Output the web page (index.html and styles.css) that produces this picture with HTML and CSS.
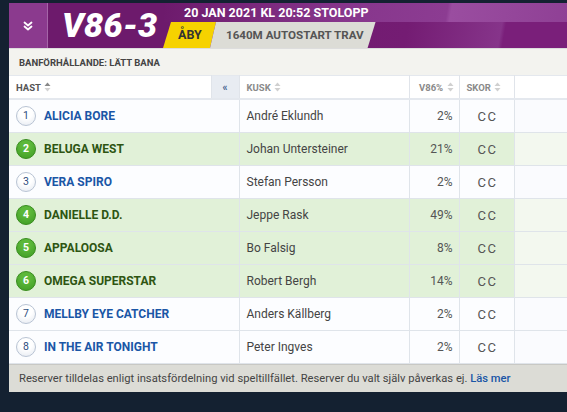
FILE: index.html
```html
<!DOCTYPE html>
<html lang="sv">
<head>
<meta charset="utf-8">
<link rel="stylesheet" href="styles.css">
</head>
<body>
<div class="panel">
  <header class="head">
    <button class="toggle" aria-label="Visa">
      <svg width="10" height="10" viewBox="0 0 10 10"><path d="M1.5 1.5 L5 4.5 L8.5 1.5 M1.5 5.5 L5 8.5 L8.5 5.5" fill="none" stroke="#fff" stroke-width="1.8" stroke-linecap="round" stroke-linejoin="round"/></svg>
    </button>
    <div class="title">V86-3</div>
    <div class="info">
      <div class="date">20 JAN 2021 KL 20:52 STOLOPP</div>
      <div class="tags">
        <span class="track">ÅBY</span>
        <span class="dist">1640M AUTOSTART TRAV</span>
      </div>
    </div>
  </header>
  <div class="cond">BANFÖRHÅLLANDE: LÄTT BANA</div>
  <table class="grid">
    <colgroup>
      <col class="c-hast"><col class="c-btn"><col class="c-kusk"><col class="c-pct"><col class="c-skor"><col>
    </colgroup>
    <thead>
      <tr>
        <th class="th-hast">HAST <svg class="sort" width="7" height="10" viewBox="0 0 7 10"><path d="M3.5 0.5 L6.5 4 L0.5 4Z" fill="#888"/><path d="M3.5 9.5 L6.5 6 L0.5 6Z" fill="#d2d2d2"/></svg></th>
        <th class="th-btn">«</th>
        <th class="th-light">KUSK <svg class="sort" width="7" height="10" viewBox="0 0 7 10"><path d="M3.5 0.5 L6.5 4 L0.5 4Z" fill="#d0d0d0"/><path d="M3.5 9.5 L6.5 6 L0.5 6Z" fill="#d0d0d0"/></svg></th>
        <th class="th-light th-pct">V86% <svg class="sort" width="7" height="10" viewBox="0 0 7 10"><path d="M3.5 0.5 L6.5 4 L0.5 4Z" fill="#d0d0d0"/><path d="M3.5 9.5 L6.5 6 L0.5 6Z" fill="#d0d0d0"/></svg></th>
        <th class="th-light">SKOR <svg class="sort" width="7" height="10" viewBox="0 0 7 10"><path d="M3.5 0.5 L6.5 4 L0.5 4Z" fill="#d0d0d0"/><path d="M3.5 9.5 L6.5 6 L0.5 6Z" fill="#d0d0d0"/></svg></th>
        <th class="th-end"></th>
      </tr>
    </thead>
    <tbody>
      <tr><td colspan="2"><span class="num">1</span><span class="name">ALICIA BORE</span></td><td class="kusk">André Eklundh</td><td class="pct">2%</td><td class="skor">CC</td><td class="end"></td></tr>
      <tr class="sel"><td colspan="2"><span class="num">2</span><span class="name">BELUGA WEST</span></td><td class="kusk">Johan Untersteiner</td><td class="pct">21%</td><td class="skor">CC</td><td class="end"></td></tr>
      <tr><td colspan="2"><span class="num">3</span><span class="name">VERA SPIRO</span></td><td class="kusk">Stefan Persson</td><td class="pct">2%</td><td class="skor">CC</td><td class="end"></td></tr>
      <tr class="sel"><td colspan="2"><span class="num">4</span><span class="name">DANIELLE D.D.</span></td><td class="kusk">Jeppe Rask</td><td class="pct">49%</td><td class="skor">CC</td><td class="end"></td></tr>
      <tr class="sel"><td colspan="2"><span class="num">5</span><span class="name">APPALOOSA</span></td><td class="kusk">Bo Falsig</td><td class="pct">8%</td><td class="skor">CC</td><td class="end"></td></tr>
      <tr class="sel"><td colspan="2"><span class="num">6</span><span class="name">OMEGA SUPERSTAR</span></td><td class="kusk">Robert Bergh</td><td class="pct">14%</td><td class="skor">CC</td><td class="end"></td></tr>
      <tr><td colspan="2"><span class="num">7</span><span class="name">MELLBY EYE CATCHER</span></td><td class="kusk">Anders Källberg</td><td class="pct">2%</td><td class="skor">CC</td><td class="end"></td></tr>
      <tr><td colspan="2"><span class="num">8</span><span class="name">IN THE AIR TONIGHT</span></td><td class="kusk">Peter Ingves</td><td class="pct">2%</td><td class="skor">CC</td><td class="end"></td></tr>
    </tbody>
  </table>
  <footer class="foot">Reserver tilldelas enligt insatsfördelning vid speltillfället. Reserver du valt själv påverkas ej. <a href="#">Läs mer</a></footer>
</div>
</body>
</html>
```
FILE: styles.css
```css
html, body { margin: 0; padding: 0; }
body {
  background: #142131;
  font-family: Roboto, "Noto Sans", Arial, sans-serif;
  padding: 3px 0 0 9px;
  height: 412px;
  box-sizing: border-box;
  overflow: hidden;
}
.panel { width: 558px; }

.head {
  display: flex;
  height: 45px;
  background: #6d1a6c;
  overflow: hidden;
}
.toggle {
  width: 39px;
  flex: none;
  border: 0;
  border-right: 1px solid #a565a8;
  background: #8b3a8e;
  display: flex;
  align-items: center;
  justify-content: center;
  padding: 0;
}
.title {
  flex: none;
  width: 116px;
  padding-left: 14px;
  box-sizing: border-box;
  color: #fff;
  font-weight: 900;
  font-style: italic;
  font-size: 34px;
  line-height: 45px;
  letter-spacing: 0.3px;
}
.info {
  flex: 1;
  display: flex;
  flex-direction: column;
}
.date {
  height: 19px;
  padding-left: 20px;
  color: #fff;
  font-weight: 700;
  font-size: 12.5px;
  line-height: 20px;
  background: linear-gradient(100deg, #6d1a6c 0%, #87368c 45%, #8c3c92 70%, #9a4da0 71%, #8f4095 100%);
}
.tags {
  flex: 1;
  display: flex;
  background: linear-gradient(100deg, #6d1a6c 0%, #741c73 60%, #86348a 83%, #7a1f7a 84%, #7a1f7a 100%);
}
.track {
  width: 53px;
  box-sizing: border-box;
  background: #f6d200;
  color: #333;
  font-weight: 700;
  font-size: 12.5px;
  line-height: 26px;
  padding: 0 0 0 15px;
  margin-left: -1px;
  clip-path: polygon(8px 0, 100% 0, calc(100% - 6px) 100%, 0 100%);
}
.dist {
  background: #dcdcd6;
  color: #555;
  font-weight: 700;
  font-size: 11.6px;
  line-height: 26px;
  padding: 0 12px 0 16px;
  margin-left: -6px;
  white-space: nowrap;
  clip-path: polygon(6px 0, 100% 0, calc(100% - 8px) 100%, 0 100%);
}

.cond {
  height: 27px;
  background: #f3f3ef;
  color: #444;
  font-size: 9.5px;
  font-weight: 700;
  line-height: 27px;
  padding-left: 10px;
  border-top: 1px solid #ddd;
  box-sizing: border-box;
}

.grid {
  width: 558px;
  border-collapse: collapse;
  table-layout: fixed;
  background: #fff;
}
.c-hast { width: 202px; }
.c-btn { width: 28px; }
.c-kusk { width: 170px; }
.c-pct { width: 50px; }
.c-skor { width: 55px; }

.grid th {
  height: 22px;
  padding: 0 0 0 7px;
  text-align: left;
  font-size: 9.5px;
  font-weight: 700;
  color: #555;
  border-top: 1px solid #e4e8ee;
  border-right: 1px solid #e0e4ea;
  border-bottom: 2px solid #e4e8ee;
  white-space: nowrap;
}
.grid th .sort { vertical-align: -1px; margin-left: 1px; }
.grid th.th-light { color: #8a8a8a; }
.grid th.th-pct { text-align: right; padding: 0 5px 0 0; }
.grid th.th-btn {
  background: #e8ecf2;
  color: #40608e;
  font-size: 10px;
  text-align: center;
  padding: 0;
}
.grid th.th-end { border-right: 0; background: #fff; }

.grid td {
  height: 32px;
  padding: 0;
  border-bottom: 1px solid #dfe4ea;
  border-right: 1px solid #dfe4ea;
  background: #fcfdff;
  font-size: 12px;
  color: #444;
  white-space: nowrap;
}
.grid tr.sel td { background: #e1f1d8; }
.grid td.end { border-right: 0; background: #fafbfe; }
.grid tr.sel td.end { background: #f3f8ef; }

.num {
  display: inline-block;
  width: 18px;
  height: 18px;
  margin: 0 8px 0 7px;
  border-radius: 50%;
  border: 1px solid #b9c4d4;
  background: radial-gradient(circle at 50% 30%, #ffffff 40%, #e3e8f0 100%);
  color: #2d4d7d;
  font-size: 10.5px;
  line-height: 18px;
  text-align: center;
  vertical-align: middle;
}
.name {
  font-weight: 700;
  color: #1a56a6;
  font-size: 12px;
  vertical-align: middle;
}
tr.sel .num {
  background: radial-gradient(circle at 50% 30%, #5cb83a 30%, #3d9a22 100%);
  border-color: #3a8d20;
  color: #fff;
  font-weight: 700;
}
tr.sel .name { color: #2e5512; }
.kusk { padding-left: 7px !important; }
.pct { text-align: right; padding-right: 6px !important; color: #555 !important; }
.skor {
  padding-left: 18px !important;
  font-size: 13px !important;
  letter-spacing: 1.5px;
  color: #555 !important;
}

.foot {
  height: 28px;
  background: #dcdcd6;
  border-top: 1px solid #c8c8c4;
  color: #444;
  font-size: 11.2px;
  line-height: 27px;
  padding-left: 10px;
  box-sizing: border-box;
  white-space: nowrap;
}
.foot a { color: #1a56a6; text-decoration: none; font-weight: 500; }
```
